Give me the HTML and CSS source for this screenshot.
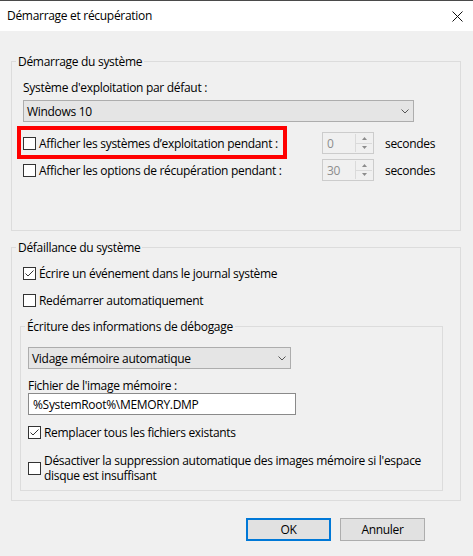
FILE: index.html
```html
<!DOCTYPE html>
<html lang="fr">
<head>
<meta charset="utf-8">
<title>Démarrage et récupération</title>
<link rel="stylesheet" href="styles.css">
</head>
<body>
<div class="window">
  <header class="titlebar">
    <span class="title">Démarrage et récupération</span>
    <svg class="close" width="11" height="11" viewBox="0 0 11 11" aria-label="Fermer"><path d="M0.5 0.5 L10.5 10.5 M10.5 0.5 L0.5 10.5" stroke="#111" stroke-width="1" fill="none"/></svg>
  </header>

  <main class="content">
    <fieldset class="group">
      <legend>Démarrage du système</legend>
      <div class="group-body startup-body">
        <div class="field-label">Système d'exploitation par défaut :</div>
        <div class="select select-os">
          <span>Windows 10</span>
          <svg class="chevron" width="8" height="5" viewBox="0 0 8 5"><path d="M0.5 0.5 L4 4 L7.5 0.5" fill="none" stroke="#555" stroke-width="1"/></svg>
        </div>

        <div class="timed-row first">
          <label class="check highlight"><span class="box"></span><span>Afficher les systèmes d’exploitation pendant :</span></label>
          <div class="spin">
            <span class="spin-value">0</span>
            <span class="spin-buttons">
              <span class="spin-btn"><svg width="5" height="3" viewBox="0 0 5 3"><path d="M0 3 L2.5 0 L5 3 Z" fill="#8c8c8c"/></svg></span>
              <span class="spin-btn down"><svg width="5" height="3" viewBox="0 0 5 3"><path d="M0 0 L2.5 3 L5 0 Z" fill="#8c8c8c"/></svg></span>
            </span>
          </div>
          <span class="unit">secondes</span>
        </div>

        <div class="timed-row second">
          <label class="check"><span class="box"></span><span>Afficher les options de récupération pendant :</span></label>
          <div class="spin">
            <span class="spin-value">30</span>
            <span class="spin-buttons">
              <span class="spin-btn"><svg width="5" height="3" viewBox="0 0 5 3"><path d="M0 3 L2.5 0 L5 3 Z" fill="#8c8c8c"/></svg></span>
              <span class="spin-btn down"><svg width="5" height="3" viewBox="0 0 5 3"><path d="M0 0 L2.5 3 L5 0 Z" fill="#8c8c8c"/></svg></span>
            </span>
          </div>
          <span class="unit">secondes</span>
        </div>
      </div>
    </fieldset>

    <fieldset class="group failure">
      <legend>Défaillance du système</legend>
      <div class="group-body failure-body">
        <label class="check check-row"><span class="box checked"><svg width="11" height="11" viewBox="0 0 11 11"><path d="M1.5 5.5 L4 8 L9.5 2.5" fill="none" stroke="#333" stroke-width="1"/></svg></span><span>Écrire un événement dans le journal système</span></label>
        <label class="check check-row restart"><span class="box"></span><span>Redémarrer automatiquement</span></label>

        <fieldset class="group inner-group">
          <legend>Écriture des informations de débogage</legend>
          <div class="inner-body">
            <div class="select select-dump">
              <span>Vidage mémoire automatique</span>
              <svg class="chevron" width="8" height="5" viewBox="0 0 8 5"><path d="M0.5 0.5 L4 4 L7.5 0.5" fill="none" stroke="#555" stroke-width="1"/></svg>
            </div>
            <div class="field-label dump-label">Fichier de l'image mémoire :</div>
            <div class="textbox">%SystemRoot%\MEMORY.DMP</div>
            <label class="check check-row replace"><span class="box checked"><svg width="11" height="11" viewBox="0 0 11 11"><path d="M1.5 5.5 L4 8 L9.5 2.5" fill="none" stroke="#333" stroke-width="1"/></svg></span><span>Remplacer tous les fichiers existants</span></label>
            <label class="check multi"><span class="box"></span><span>Désactiver la suppression automatique des images mémoire si l'espace<br>disque est insuffisant</span></label>
          </div>
        </fieldset>
      </div>
    </fieldset>

    <div class="buttons">
      <button class="btn default" type="button">OK</button>
      <button class="btn" type="button">Annuler</button>
    </div>
  </main>
</div>
</body>
</html>
```

FILE: styles.css
```css
* { box-sizing: border-box; }

html, body {
  margin: 0;
  padding: 0;
}

body {
  width: 473px;
  height: 556px;
  overflow: hidden;
  background: #f0f0f0;
  font-family: "Open Sans", "Noto Sans", "DejaVu Sans", sans-serif;
  font-size: 12px;
  line-height: 15px;
  letter-spacing: -0.3px;
  color: #000;
}

.titlebar {
  height: 31px;
  background: #fff;
  border-top: 1px solid #4a4a4a;
  display: flex;
  align-items: center;
  justify-content: space-between;
  padding: 0 10px 0 7px;
}

.title { line-height: 16px; }

.close { display: block; }

.content {
  padding: 23px 12px 0 11px;
}

.group {
  margin: 0;
  padding: 0;
  border: 1px solid #dcdcdc;
  min-width: 0;
}

legend {
  padding: 0 2px;
  margin-left: 4px;
  line-height: 15px;
}

.startup-body {
  padding: 11px 0 49px 11px;
}

.field-label { line-height: 16px; }

.select {
  display: flex;
  align-items: center;
  justify-content: space-between;
  height: 22px;
  border: 1px solid #adadad;
  background: #e5e5e5;
  padding: 0 4px 0 3px;
}

.chevron { display: block; }

.select-os {
  width: 391px;
  margin-top: 4px;
}

.timed-row {
  display: grid;
  grid-template-columns: 299px 52px auto;
  align-items: center;
  height: 22px;
}

.timed-row.first { margin-top: 10px; }
.timed-row.second { margin-top: 5px; }

.check {
  display: flex;
  align-items: center;
  gap: 3px;
}

.box {
  width: 13px;
  height: 13px;
  border: 1px solid #333;
  background: #fff;
  flex: none;
  display: flex;
  align-items: center;
  justify-content: center;
}

.box svg { display: block; }

.highlight {
  width: 270px;
  border: 4px solid #ff0000;
  margin: -6px 0 -5px -6px;
  padding: 6px 0 4px 2px;
}

.spin {
  display: flex;
  height: 22px;
  border: 1px solid #cccccc;
  background: #f0f0f0;
}

.spin-value {
  flex: 1;
  display: flex;
  align-items: center;
  padding-left: 4px;
  color: #8d8d8d;
}

.spin-buttons {
  width: 17px;
  display: flex;
  flex-direction: column;
  border-left: 1px solid #dadada;
  margin: 1px 1px 1px 0;
}

.spin-btn {
  flex: 1;
  display: flex;
  align-items: center;
  justify-content: center;
}

.spin-btn.down { border-top: 1px solid #dadada; }

.spin-btn svg { display: block; }

.unit { margin-left: 11px; }

.group.failure { margin-top: 9px; }

.failure-body {
  padding: 10px 17px 9px 11px;
}

.check-row { height: 16px; }

.restart { margin-top: 11px; }

.group.inner-group {
  margin: 11px 0 0 -3px;
}

.inner-body {
  padding: 13px 0 7px 7px;
}

.select-dump { width: 263px; }

.dump-label {
  margin-top: 9px;
  line-height: 15px;
}

.textbox {
  width: 268px;
  height: 22px;
  border: 1px solid #8a8a8a;
  background: #fff;
  display: flex;
  align-items: center;
  padding: 0 4px;
}

.replace { margin-top: 9px; }

.multi { margin-top: 13px; }

.buttons {
  display: flex;
  justify-content: flex-end;
  gap: 9px;
  margin-top: 17px;
  padding-right: 36px;
}

.btn {
  width: 85px;
  height: 23px;
  border: 1px solid #adadad;
  background: #e1e1e1;
  font: inherit;
  letter-spacing: inherit;
  color: #000;
  padding: 0;
  margin: 0;
}

.btn.default { border: 2px solid #0078d7; }
```
